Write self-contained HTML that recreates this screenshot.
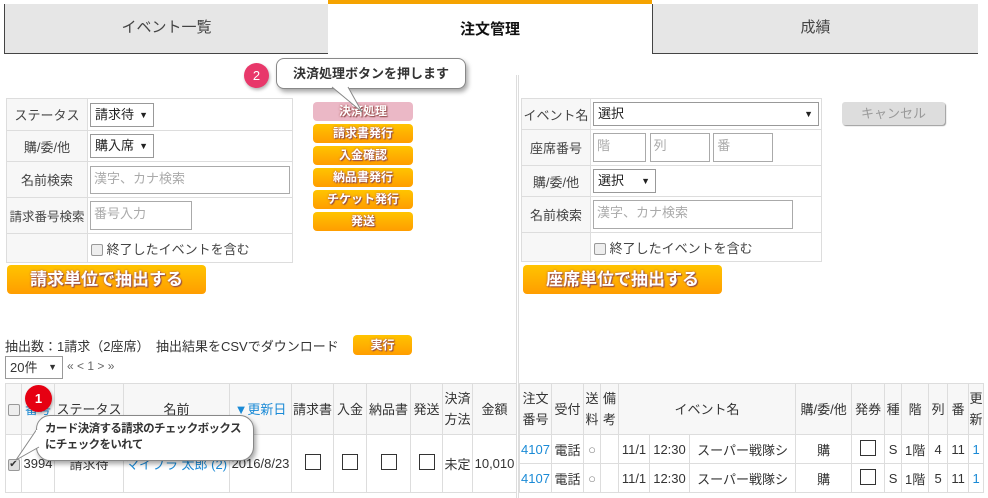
<!DOCTYPE html><html><head><meta charset="utf-8"><style>
*{box-sizing:border-box;margin:0;padding:0}
body{width:988px;height:498px;background:#fff;font-family:"Liberation Sans","Noto Sans CJK JP",sans-serif;font-size:13px;color:#333;position:relative;overflow:hidden}
.a{position:absolute}
.tab{position:absolute;top:4px;height:50px;background:#e6e6e6;border-bottom:1px solid #444;border-left:1px solid #444;text-align:center;line-height:48px;font-size:15px;color:#444}
table{border-collapse:collapse;position:absolute}
td,th{border:1px solid #ddd;font-weight:normal}
.f td:first-child{background:#f7f7f7;text-align:center;color:#444}
.inp{display:inline-block;border:1px solid #aaa;height:26px;line-height:24px;padding-left:3px;color:#aaa;font-size:13px;vertical-align:middle}
.sel{display:inline-block;border:1px solid #999;height:24px;line-height:22px;padding:0 4px;color:#222;vertical-align:middle;position:relative}
.sel:after{content:"▼";position:absolute;right:5px;font-size:9px}
.ob{position:absolute;background:linear-gradient(#ffc400,#ff9d00);border-radius:4px;color:#fff;text-align:center;text-shadow:0 0 2px #a55,1px 1px 1px #844;font-weight:bold}
.cb{display:inline-block;width:12px;height:12px;border:1px solid #999;border-radius:2px;background:#eee;vertical-align:middle}
.bx{display:inline-block;width:16px;height:16px;border:1px solid #333}
.r th{background:#f7f7f7;color:#333;font-size:13px;line-height:21px}
.r th.bl,.r td.bl{color:#1a8ad6}
.r td{text-align:center;font-size:13px}
.bl{color:#1a8ad6}
.bub{position:absolute;background:#fff;border:1px solid #888;border-radius:8px;box-shadow:2px 3px 5px rgba(0,0,0,.35);font-weight:bold;color:#333;white-space:nowrap}
</style></head><body>
<div class="tab" style="left:4px;width:324px">イベント一覧</div>
<div class="a" style="left:328px;top:0;width:324px;height:54px;border-top:4px solid #f5a300;text-align:center;line-height:52px;font-size:15px;font-weight:bold;color:#111">注文管理</div>
<div class="tab" style="left:652px;width:326px">成績</div>
<div class="a" style="left:516px;top:75px;width:3px;height:423px;border-left:1px solid #ddd;border-right:1px solid #ddd"></div>

<table class="f" style="left:6px;top:98px;width:287px">
<tr style="height:32px"><td style="width:81px">ステータス</td><td style="padding-left:2px"><span class="sel" style="width:64px">請求待</span></td></tr>
<tr style="height:31px"><td>購/委/他</td><td style="padding-left:2px"><span class="sel" style="width:64px">購入席</span></td></tr>
<tr style="height:36px"><td>名前検索</td><td style="padding-left:2px"><span class="inp" style="width:200px;height:28px">漢字、カナ検索</span></td></tr>
<tr style="height:36px"><td style="font-size:12.5px">請求番号検索</td><td style="padding-left:2px"><span class="inp" style="width:102px;height:29px">番号入力</span></td></tr>
<tr style="height:29px"><td></td><td style="padding-left:3px"><span class="cb"></span> <span style="color:#444">終了したイベントを含む</span></td></tr>
</table>
<div class="ob" style="left:7px;top:265px;width:199px;height:29px;line-height:29px;font-size:17px">請求単位で抽出する</div>

<div class="ob" style="left:313px;top:102px;width:100px;height:19px;line-height:19px;background:#ebb8c6;font-size:12px">決済処理</div>
<div class="ob" style="left:313px;top:124px;width:100px;height:19px;line-height:19px;font-size:12px">請求書発行</div>
<div class="ob" style="left:313px;top:146px;width:100px;height:19px;line-height:19px;font-size:12px">入金確認</div>
<div class="ob" style="left:313px;top:168px;width:100px;height:19px;line-height:19px;font-size:12px">納品書発行</div>
<div class="ob" style="left:313px;top:190px;width:100px;height:19px;line-height:19px;font-size:12px">チケット発行</div>
<div class="ob" style="left:313px;top:212px;width:100px;height:19px;line-height:19px;font-size:12px">発送</div>

<table class="f" style="left:521px;top:98px;width:301px">
<tr style="height:31px"><td style="width:69px">イベント名</td><td style="padding-left:2px"><span class="sel" style="width:226px">選択</span></td></tr>
<tr style="height:36px"><td>座席番号</td><td style="padding-left:2px"><span class="inp" style="width:53px;height:29px">階</span> <span class="inp" style="width:60px;height:29px">列</span> <span class="inp" style="width:60px;height:29px">番</span></td></tr>
<tr style="height:31px"><td>購/委/他</td><td style="padding-left:2px"><span class="sel" style="width:63px">選択</span></td></tr>
<tr style="height:36px"><td>名前検索</td><td style="padding-left:2px"><span class="inp" style="width:200px;height:29px">漢字、カナ検索</span></td></tr>
<tr style="height:29px"><td></td><td style="padding-left:3px"><span class="cb"></span> <span style="color:#444">終了したイベントを含む</span></td></tr>
</table>
<div class="a" style="left:842px;top:102px;width:103px;height:23px;background:#ddd;border-radius:3px;box-shadow:1px 1px 1px #999;color:#999;text-align:center;line-height:23px">キャンセル</div>
<div class="ob" style="left:523px;top:265px;width:199px;height:29px;line-height:29px;font-size:17px">座席単位で抽出する</div>

<div class="a" style="left:5px;top:336px;color:#333">抽出数：1請求（2座席）　抽出結果をCSVでダウンロード</div>
<div class="ob" style="left:353px;top:335px;width:59px;height:20px;line-height:20px;font-size:12px">実行</div>
<div class="a" style="left:5px;top:356px;width:58px;height:23px;border:1px solid #999;line-height:21px;padding-left:4px">20件<span style="position:absolute;right:5px;font-size:9px">▼</span></div>
<div class="a" style="left:67px;top:359px;color:#666;font-size:12px">« &lt; 1 &gt; »</div>

<table class="r" style="left:5px;top:383px;width:512px">
<tr style="height:51px"><th style="width:16px"><span class="cb"></span></th><th style="width:33px" class="bl">番号</th><th style="width:69px">ステータス</th><th style="width:106px">名前</th><th style="width:62px" class="bl">▼更新日</th><th style="width:42px">請求書</th><th style="width:33px">入金</th><th style="width:44px">納品書</th><th style="width:32px">発送</th><th style="width:30px">決済<br>方法</th><th>金額</th></tr>
<tr style="height:58px"><td><span class="cb" style="background:#ddd;font-size:10px;line-height:10px;color:#333">✔</span></td><td>3994</td><td>請求待</td><td class="bl">マイブラ 太郎 (2)</td><td>2016/8/23</td><td><span class="bx"></span></td><td><span class="bx"></span></td><td><span class="bx"></span></td><td><span class="bx"></span></td><td>未定</td><td>10,010</td></tr>
</table>

<table class="r" style="left:519px;top:383px;width:465px">
<tr style="height:51px"><th style="width:32px">注文<br>番号</th><th style="width:32px">受付</th><th style="width:17px">送<br>料</th><th style="width:18px">備<br>考</th><th colspan="3" style="width:171px">イベント名</th><th style="width:56px">購/委/他</th><th style="width:33px">発券</th><th style="width:17px">種</th><th style="width:27px">階</th><th style="width:19px">列</th><th style="width:21px">番</th><th>更<br>新</th></tr>
<tr style="height:29px"><td class="bl">4107</td><td>電話</td><td style="color:#888">○</td><td></td><td style="width:31px">11/1</td><td style="width:40px">12:30</td><td>スーパー戦隊シ</td><td>購</td><td><span class="bx"></span></td><td>S</td><td>1階</td><td>4</td><td>11</td><td class="bl">1</td></tr>
<tr style="height:29px"><td class="bl">4107</td><td>電話</td><td style="color:#888">○</td><td></td><td>11/1</td><td>12:30</td><td>スーパー戦隊シ</td><td>購</td><td><span class="bx"></span></td><td>S</td><td>1階</td><td>5</td><td>11</td><td class="bl">1</td></tr>
</table>

<div class="bub" style="left:276px;top:58px;width:190px;height:31px;line-height:29px;text-align:center;font-size:13px">決済処理ボタンを押します</div>
<svg class="a" style="left:300px;top:86px" width="70" height="30"><path d="M32 1 L62 26 L48 1" fill="#fff" stroke="#888"/><path d="M33 0 L47 0" stroke="#fff" stroke-width="2"/></svg>
<div class="a" style="left:244px;top:63px;width:25px;height:25px;border-radius:50%;background:#e8386a;color:#fff;text-align:center;line-height:25px;font-size:13px;box-shadow:1px 2px 3px rgba(0,0,0,.3)">2</div>

<div class="bub" style="left:36px;top:415px;width:218px;height:46px;padding:5px 0 0 8px;font-size:11.5px;line-height:16px;border-radius:14px;letter-spacing:-0.6px">カード決済する請求のチェックボックス<br>にチェックをいれて</div>
<svg class="a" style="left:14px;top:425px" width="30" height="40"><path d="M23 4 L2 35 L25 22" fill="#fff" stroke="#888"/><path d="M23 5 L23 21" stroke="#fff" stroke-width="2"/></svg>
<div class="a" style="left:25px;top:385px;width:27px;height:27px;border-radius:50%;background:#e60012;color:#fff;text-align:center;line-height:27px;font-weight:bold;font-size:13px;box-shadow:1px 2px 3px rgba(0,0,0,.3)">1</div>
</body></html>
